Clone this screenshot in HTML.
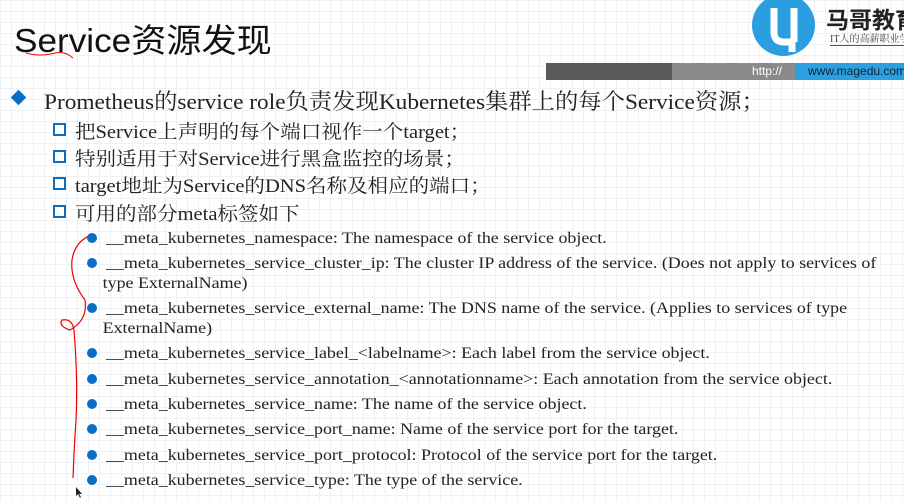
<!DOCTYPE html>
<html><head><meta charset="utf-8"><style>
body{margin:0;width:904px;height:501px;overflow:hidden;position:relative;background:#fff;
background-image:linear-gradient(#eef1f5 1px,transparent 1px),linear-gradient(90deg,#eef1f5 1px,transparent 1px);background-size:11px 11px;
font-family:"Liberation Serif","Noto Serif CJK SC",serif;color:#222}
.a{position:absolute;white-space:nowrap;transform-origin:0 0}
.t{font-family:"Liberation Sans","Noto Sans CJK SC",sans-serif;font-size:33px;left:14px;top:14px;color:#111;transform:scaleX(1.065)}
.l1{font-size:22px;left:44px;top:85px;transform:scaleX(1.06)}
.l2{font-size:19px;left:75px;transform:scaleX(1.08)}
.l3{font-size:16px;left:106px;line-height:20px;transform:scaleX(1.12)}
.sq{position:absolute;left:53px;width:9px;height:9px;border:2.5px solid #0a6fc2;background:#fff}
.dot{position:absolute;left:87px;width:10px;height:10px;border-radius:50%;background:#0a6fc2}
</style></head><body>
<div class="a t">Service资源发现</div>
<svg class="a" style="left:0;top:0" width="904" height="501">
<path d="M26 53 Q40 57 55 53 Q65 51 73 58" stroke="#e00" fill="none" stroke-width="1"/>
<path d="M94 234 Q75 240 72 260 Q70 280 85 300 Q88 320 70 330 Q58 326 62 320 Q72 318 74 330 Q78 380 76 420 Q74 450 73 478" stroke="#e00" fill="none" stroke-width="1.2"/>
<path d="M76 487 l0 9 l2 -2 l2 4 l1 -1 l-2 -3 l3 0z" fill="#222"/>
</svg>
<div class="a" style="left:752px;top:-6px;width:63px;height:62px;border-radius:50%;background:#2a9fe0"></div>
<svg class="a" style="left:752px;top:0" width="64" height="56"><path d="M22 8 L22 32 Q22 42 32 42 L40 42 L40 52 M42 8 L42 42" stroke="#fff" stroke-width="7" fill="none" stroke-linejoin="round"/></svg>
<div class="a" style="left:826px;top:1px;font-family:'Noto Sans CJK SC',sans-serif;font-size:23px;font-weight:bold;color:#222">马哥教育</div>
<div class="a" style="left:830px;top:30px;font-size:10px;color:#444;border-bottom:1px solid #555">IT人的高薪职业学院</div>
<div class="a" style="left:546px;top:63px;width:126px;height:17px;background:#5a5a5a"></div>
<div class="a" style="left:672px;top:63px;width:123px;height:17px;background:#8a8a8a"></div>
<div class="a" style="left:795px;top:63px;width:109px;height:17px;background:#2c9fe0"></div>
<div class="a" style="left:752px;top:64px;font-family:'Liberation Sans',sans-serif;font-size:12px;color:#fff">http://</div>
<div class="a" style="left:808px;top:64px;font-family:'Liberation Sans',sans-serif;font-size:12px;color:#123">www.magedu.com</div>
<div class="a" style="left:13px;top:92px;width:11px;height:11px;background:#0a6fc2;transform:rotate(45deg);transform-origin:50% 50%"></div>
<div class="a l1">Prometheus的service role负责发现Kubernetes集群上的每个Service资源；</div>
<div class="sq" style="top:123px"></div><div class="a l2" style="top:117px">把Service上声明的每个端口视作一个target；</div>
<div class="sq" style="top:150px"></div><div class="a l2" style="top:144px">特别适用于对Service进行黑盒监控的场景；</div>
<div class="sq" style="top:177px"></div><div class="a l2" style="top:171px">target地址为Service的DNS名称及相应的端口；</div>
<div class="sq" style="top:205px"></div><div class="a l2" style="top:199px">可用的部分meta标签如下</div>
<div class="dot" style="top:233px"></div><div class="a l3" style="top:229px">__meta_kubernetes_namespace: The namespace of the service object.</div>
<div class="dot" style="top:258px"></div><div class="a l3" style="top:254px">__meta_kubernetes_service_cluster_ip: The cluster IP address of the service. (Does not apply to services of<br><span style="margin-left:-3px">type ExternalName)</span></div>
<div class="dot" style="top:303px"></div><div class="a l3" style="top:299px">__meta_kubernetes_service_external_name: The DNS name of the service. (Applies to services of type<br><span style="margin-left:-3px">ExternalName)</span></div>
<div class="dot" style="top:348px"></div><div class="a l3" style="top:344px">__meta_kubernetes_service_label_&lt;labelname&gt;: Each label from the service object.</div>
<div class="dot" style="top:374px"></div><div class="a l3" style="top:370px">__meta_kubernetes_service_annotation_&lt;annotationname&gt;: Each annotation from the service object.</div>
<div class="dot" style="top:399px"></div><div class="a l3" style="top:395px">__meta_kubernetes_service_name: The name of the service object.</div>
<div class="dot" style="top:424px"></div><div class="a l3" style="top:420px">__meta_kubernetes_service_port_name: Name of the service port for the target.</div>
<div class="dot" style="top:450px"></div><div class="a l3" style="top:446px">__meta_kubernetes_service_port_protocol: Protocol of the service port for the target.</div>
<div class="dot" style="top:475px"></div><div class="a l3" style="top:471px">__meta_kubernetes_service_type: The type of the service.</div>
</body></html>
